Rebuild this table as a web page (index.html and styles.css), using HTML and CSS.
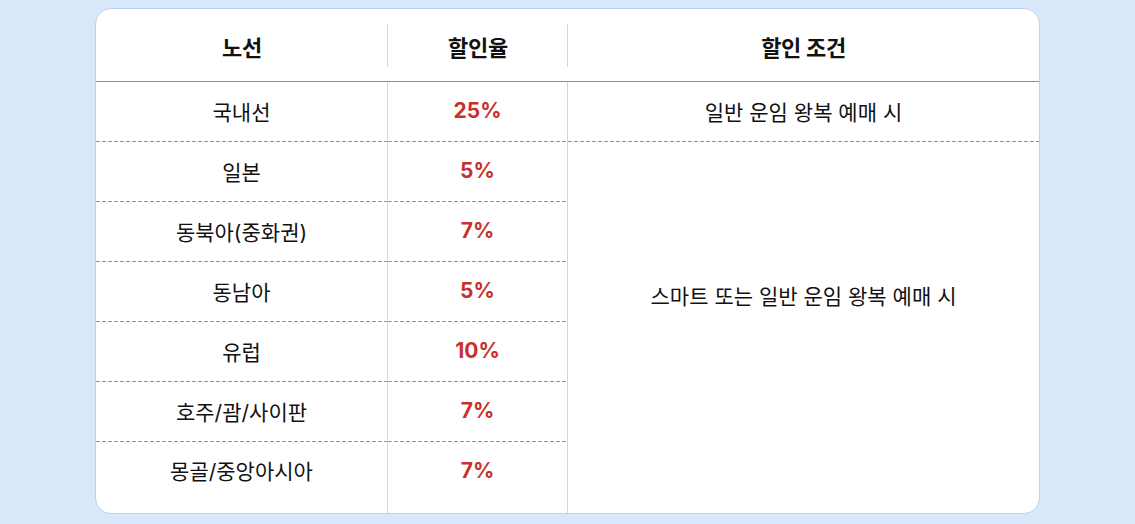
FILE: index.html
```html
<!DOCTYPE html>
<html lang="ko">
<head>
<meta charset="utf-8">
<link rel="stylesheet" href="styles.css">
</head>
<body>
<div class="card">
  <div class="grid">
    <div class="th c1"><span>노선</span></div>
    <div class="th c2"><span>할인율</span></div>
    <div class="th c3"><span>할인 조건</span></div>

    <div class="td c1 dash">국내선</div>
    <div class="td c2 dash rate">25%</div>
    <div class="td c3 dash">일반 운임 왕복 예매 시</div>

    <div class="td c1 dash">일본</div>
    <div class="td c2 dash rate">5%</div>
    <div class="td c3 span">스마트 또는 일반 운임 왕복 예매 시</div>

    <div class="td c1 dash">동북아(중화권)</div>
    <div class="td c2 dash rate">7%</div>

    <div class="td c1 dash">동남아</div>
    <div class="td c2 dash rate">5%</div>

    <div class="td c1 dash">유럽</div>
    <div class="td c2 dash rate">10%</div>

    <div class="td c1 dash">호주/괌/사이판</div>
    <div class="td c2 dash rate">7%</div>

    <div class="td c1 last">몽골/중앙아시아</div>
    <div class="td c2 last rate">7%</div>
  </div>
</div>
</body>
</html>
```

FILE: styles.css
```css
* { box-sizing: border-box; }
html, body { margin: 0; padding: 0; }
body {
  background: #d9e7fa;
  font-family: "Inter", "Noto Sans CJK KR", sans-serif;
  color: #111;
  padding: 8px 0 0 95px;
}
.card {
  width: 945px;
  height: 506px;
  background: #fff;
  border: 1px solid #bfd1e8;
  border-radius: 16px;
  overflow: hidden;
}
.grid {
  display: grid;
  grid-template-columns: 292px 180px 1fr;
  grid-template-rows: 73px repeat(6, 60px) 71px;
}
.th {
  display: flex;
  align-items: center;
  justify-content: center;
  border-bottom: 1px solid #7794ae;
  font-weight: 700;
  font-size: 22px;
  padding-top: 1px;
  letter-spacing: -0.3px;
}
.th.c1, .th.c2 { position: relative; }
.th.c1::after, .th.c2::after {
  content: "";
  position: absolute;
  right: 0;
  top: 15px;
  height: 43px;
  width: 1px;
  background: #c9d7e6;
}
.td {
  display: flex;
  align-items: center;
  justify-content: center;
  font-size: 21px;
  padding-bottom: 3px;
}
.td.c1, .td.c2 { border-right: 1px solid #c9d7e6; }
.dash {
  background-image: linear-gradient(to right, #7b98b1 0 4px, transparent 4px 6px);
  background-size: 6px 1px;
  background-repeat: repeat-x;
  background-position: left bottom;
}
.last { padding-bottom: 15px; }
.rate {
  color: #c8302d;
  font-weight: 700;
  font-size: 21px;
}
.span {
  grid-column: 3;
  grid-row: 3 / 9;
  align-items: flex-start;
  padding-top: 138px;
}
```
